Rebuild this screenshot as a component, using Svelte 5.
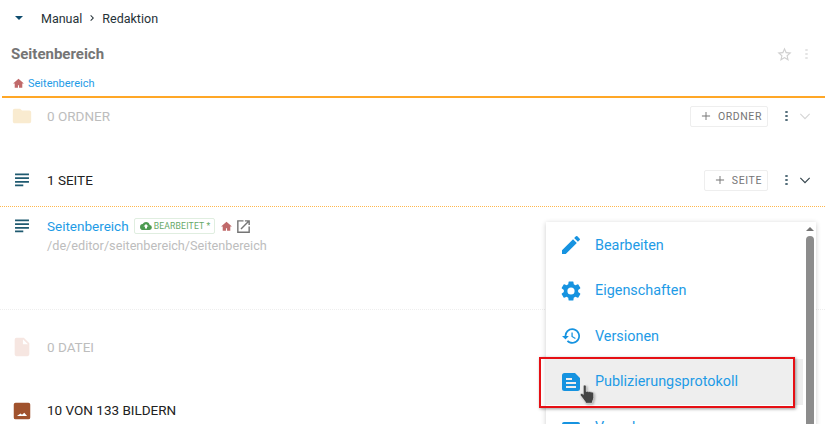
<script>
  const menu = [
    { label: 'Bearbeiten', box: '0 0 24 24', d: 'M3 17.25V21h3.75L17.81 9.94l-3.75-3.75L3 17.25zM20.71 7.04a1 1 0 0 0 0-1.41l-2.34-2.34a1 1 0 0 0-1.41 0l-1.83 1.83 3.75 3.75 1.83-1.83z' },
    { label: 'Eigenschaften', box: '0 0 24 24', d: 'M19.14 12.94c.04-.3.06-.61.06-.94s-.02-.64-.07-.94l2.03-1.58a.5.5 0 0 0 .12-.61l-1.92-3.32a.5.5 0 0 0-.59-.22l-2.39.96a7 7 0 0 0-1.62-.94l-.36-2.54a.48.48 0 0 0-.48-.41h-3.84a.48.48 0 0 0-.47.41l-.36 2.54c-.59.24-1.13.57-1.62.94l-2.39-.96a.48.48 0 0 0-.59.22L2.74 8.87a.47.47 0 0 0 .12.61l2.03 1.58c-.05.3-.09.63-.09.94s.02.64.07.94l-2.03 1.58a.5.5 0 0 0-.12.61l1.92 3.32c.12.22.37.29.59.22l2.39-.96c.5.38 1.03.7 1.62.94l.36 2.54c.05.24.24.41.48.41h3.84c.24 0 .44-.17.47-.41l.36-2.54c.59-.24 1.13-.56 1.62-.94l2.39.96c.22.08.47 0 .59-.22l1.92-3.32a.47.47 0 0 0-.12-.61l-2.01-1.58zM12 15.6a3.6 3.6 0 1 1 0-7.2 3.6 3.6 0 0 1 0 7.2z' },
    { label: 'Versionen', box: '-2.5 -2 28 28', d: 'M13 3a9 9 0 0 0-9 9H1l3.89 3.89.07.14L9 12H6a7 7 0 1 1 2.05 4.95l-1.42 1.42A9 9 0 1 0 13 3zm-1 5v5l4.28 2.54.72-1.21-3.5-2.08V8H12z' },
    { label: 'Publizierungsprotokoll', box: '0 0 24 24', d: 'M5.5 3A2.5 2.5 0 0 0 3 5.5v13A2.5 2.5 0 0 0 5.5 21h13a2.5 2.5 0 0 0 2.5-2.5V8l-5-5H5.5zM7 8h6v2H7V8zm0 4h10v2H7v-2zm0 4h10v2H7v-2z', active: true },
    { label: 'Vorschau', box: '0 0 24 24', d: 'M19 6H5a2 2 0 0 0-2 2v11a2 2 0 0 0 2 2h14a2 2 0 0 0 2-2V8a2 2 0 0 0-2-2zm0 13H5V8h14v11z' }
  ];
  const linesIcon = 'M4.4 5h15.2v1.9H4.4zM4.4 9h15.2v1.9H4.4zM4.4 13h15.2v1.9H4.4zM4.4 17h9v1.9h-9z';
  const home = 'M11 20v-5h2v5h6v-8h3L12 3 2 12h3v8z';
</script>

<div class="page">
  <header class="crumbs">
    <span class="caret"></span>
    <span>Manual</span>
    <svg class="chev" viewBox="0 0 24 24"><path d="M8.6 16.6 13.2 12 8.6 7.4 10 6l6 6-6 6z" /></svg>
    <span>Redaktion</span>
  </header>

  <div class="title-row">
    <h1>Seitenbereich</h1>
    <svg class="star" viewBox="0 0 24 24"><path d="M22 9.24l-7.19-.62L12 2 9.19 8.63 2 9.24l5.46 4.73L5.82 21 12 17.27 18.18 21l-1.63-7.03L22 9.24zM12 15.4l-3.76 2.27 1-4.28-3.32-2.88 4.38-.38L12 6.1l1.71 4.04 4.38.38-3.32 2.88 1 4.28L12 15.4z" /></svg>
    <span class="dots faint"><i></i><i></i><i></i></span>
  </div>

  <div class="path-row">
    <svg class="home" viewBox="0 0 24 24"><path d={home} /></svg>
    <span>Seitenbereich</span>
  </div>

  <section class="group dim">
    <svg class="gicon folder" viewBox="0 0 24 24"><path d="M10 4H4a2 2 0 0 0-2 2v12c0 1.1.9 2 2 2h16a2 2 0 0 0 2-2V8a2 2 0 0 0-2-2h-8l-2-2z" /></svg>
    <span class="gname">0 ORDNER</span>
    <button class="add"><svg viewBox="0 0 24 24"><path d="M19 12.8h-6.2V19h-1.6v-6.2H5v-1.6h6.2V5h1.6v6.2H19z" /></svg>ORDNER</button>
    <span class="dots"><i></i><i></i><i></i></span>
    <svg class="down faint-down" viewBox="0 0 24 24"><path d="M6.9 9 12 14.1 17.1 9l1 1L12 16.1 5.900 10z" /></svg>
  </section>

  <section class="group seite">
    <svg class="gicon lines" viewBox="0 0 24 24"><path d={linesIcon} /></svg>
    <span class="gname">1 SEITE</span>
    <button class="add"><svg viewBox="0 0 24 24"><path d="M19 12.8h-6.2V19h-1.6v-6.2H5v-1.6h6.2V5h1.6v6.2H19z" /></svg>SEITE</button>
    <span class="dots"><i></i><i></i><i></i></span>
    <svg class="down" viewBox="0 0 24 24"><path d="M6.9 9 12 14.1 17.1 9l1 1L12 16.1 5.900 10z" /></svg>
  </section>

  <article class="item">
    <svg class="gicon lines" viewBox="0 0 24 24"><path d={linesIcon} /></svg>
    <div>
      <div class="item-head">
        <span class="item-name">Seitenbereich</span>
        <span class="badge">
          <svg viewBox="0 0 24 24"><path d="M19.35 10.04A7.49 7.49 0 0 0 12 4a7.5 7.5 0 0 0-6.65 4.04A6 6 0 0 0 6 20h13a5 5 0 0 0 .35-9.96zM14 13v4h-4v-4H7l5-5 5 5h-3z" /></svg>
          BEARBEITET *
        </span>
        <svg class="home big" viewBox="0 0 24 24"><path d={home} /></svg>
        <svg class="open" viewBox="0 0 24 24"><path d="M19 19H5V5h7V3H3v18h18v-9h-2v7zM14 3v2h3.59l-9.83 9.83 1.41 1.41L19 6.41V10h2V3h-7z" /></svg>
      </div>
      <div class="item-path">/de/editor/seitenbereich/Seitenbereich</div>
    </div>
  </article>

  <section class="group dim datei">
    <svg class="gicon file" viewBox="0 0 24 24"><path d="M14 2H6a2 2 0 0 0-2 2v16c0 1.1.9 2 2 2h12a2 2 0 0 0 2-2V8l-6-6zm-1 7V3.5L18.5 9H13z" /></svg>
    <span class="gname">0 DATEI</span>
  </section>

  <section class="group bilder">
    <svg class="gicon image" viewBox="0 0 24 24"><path fill-rule="evenodd" d="M5 3h14a2 2 0 0 1 2 2v14a2 2 0 0 1-2 2H5a2 2 0 0 1-2-2V5a2 2 0 0 1 2-2zM6.500 17.500h11l-3-3.500-2.500 2.200-1.600-1.400-3.900 2.700z" /></svg>
    <span class="gname">10 VON 133 BILDERN</span>
  </section>

  <nav class="menu">
    <ul>
      {#each menu as m}
        <li class:active={m.active}>
          <svg viewBox={m.box}><path d={m.d} /></svg>
          <span>{m.label}</span>
        </li>
      {/each}
    </ul>
    <div class="scroll">
      <span class="arrow"></span>
      <span class="thumb"></span>
    </div>
  </nav>

  <div class="mark"></div>
  <svg class="hand" viewBox="0 0 18 22">
    <path d="M6 1.2c.9 0 1.6.7 1.6 1.6v5.400l1.200-.2c.6-.1 1.100.1 1.400.5.5-.3 1.200-.3 1.700.1.5-.2 1.200-.1 1.600.3.4-.2 1-.1 1.400.2.6.4.9 1 .9 1.700v4.200c0 1.300-.4 2.300-1 3.200l-.6 3H7l-.5-1.700L1.600 13c-.6-.7-.6-1.600 0-2.200.6-.5 1.400-.5 2 0l.8.8V2.800c0-.9.7-1.600 1.600-1.600z" fill="#444" stroke="#fff" stroke-width=".6" />
  </svg>
</div>

<style>
  :global(body) {
    margin: 0;
    background: #fff;
    font-family: Roboto, "Liberation Sans", sans-serif;
    overflow: hidden;
  }
  .page {
    position: relative;
    width: 825px;
    height: 424px;
    overflow: hidden;
    color: #212121;
    font-size: 13px;
  }
  svg { display: block; fill: currentColor; flex-shrink: 0; }

  .crumbs {
    height: 36px;
    display: flex;
    align-items: center;
    padding-left: 15px;
    gap: 4px;
    font-size: 12.5px;
    color: #263238;
  }
  .caret {
    width: 0;
    height: 0;
    margin: 0 14px 0 0;
    border-left: 4px solid transparent;
    border-right: 4px solid transparent;
    border-top: 4px solid #0f4c6e;
  }
  .chev { width: 12px; height: 12px; color: #263238; }

  .title-row {
    height: 36px;
    display: flex;
    align-items: center;
    padding: 0 17px 0 11px;
  }
  h1 {
    margin: 0;
    flex: 1;
    font-size: 15px;
    font-weight: 700;
    color: #757575;
  }
  .star { width: 17px; height: 17px; color: #d0d0d0; margin-right: 12px; }

  .dots { display: flex; flex-direction: column; gap: 1.5px; width: 3px; }
  .dots i { width: 3px; height: 2.6px; border-radius: 50%; background: #546e7a; }
  .dots.faint i { background: #e4e4e4; }

  .path-row {
    height: 26px;
    box-sizing: border-box;
    padding: 0 0 1px 10px;
    margin-left: 2px;
    display: flex;
    align-items: center;
    gap: 3px;
    font-size: 11px;
    color: #1e9be6;
    border-bottom: 2px solid #ffa726;
  }
  .home { width: 13px; height: 13px; color: #c0696a; }
  .home.big { margin-left: 5.5px; }

  .group {
    display: flex;
    align-items: center;
    height: 36px;
    padding: 0 10px 0 11px;
    font-size: 13.5px;
  }
  .gicon { width: 22px; height: 22px; margin-right: 14px; }
  .gname { flex: 1; }
  .dim .gname { color: #bdbdbd; }
  .folder { color: #f9ebd0; }
  .lines { color: #1f5a70; }
  .file { color: #f6e6e1; }
  .image { color: #a0522d; margin-top: 2px; }

  .seite { margin-top: 28px; }

  .add {
    height: 21px;
    display: flex;
    align-items: center;
    gap: 5px;
    padding: 0 5px 0 8px;
    margin-right: 17px;
    font: 400 10.5px Roboto, sans-serif;
    letter-spacing: .6px;
    color: #757575;
    background: #fff;
    border: 1px solid #eee;
    border-radius: 2px;
  }
  .add svg { width: 14px; height: 14px; }
  .down { width: 20px; height: 20px; margin-left: 7px; color: #37474f; }
  .faint-down { color: #d6d6d6; }

  .item {
    height: 104px;
    box-sizing: border-box;
    margin-top: 8px;
    padding: 9px 10px 0 11px;
    display: flex;
    border-top: 1px dotted #ffb74d;
    border-bottom: 1px dotted #eee;
  }
  .item .gicon { margin-top: -1px; }
  .item-head { display: flex; align-items: center; height: 20px; }
  .item-name { font-size: 13.5px; color: #1e9be6; }
  .badge {
    display: flex;
    align-items: center;
    gap: 2px;
    height: 14px;
    margin-left: 5px;
    padding: 0 3px 0 5px;
    font-size: 8.6px;
    letter-spacing: .2px;
    color: #66a866;
    border: 1px solid #e0eee0;
    border-radius: 2px;
  }
  .badge svg { width: 12px; height: 12px; color: #4c9a50; }
  .open { width: 17px; height: 17px; margin-left: 2px; color: #757575; }
  .item-path { margin-top: 2px; font-size: 12.7px; color: #bdbdbd; }

  .datei { margin-top: 19px; }
  .bilder { margin-top: 27px; }
  .bilder .gname { color: #212121; }

  .menu {
    position: absolute;
    left: 546px;
    top: 222px;
    width: 270px;
    height: 240px;
    display: flex;
    background: #fff;
    box-shadow: 0 1px 5px rgba(0, 0, 0, .2);
  }
  .menu ul { list-style: none; margin: 0; padding: 0.4px 0 0; flex: 1; }
  .menu li {
    height: 45.6px;
    display: flex;
    align-items: center;
    padding-left: 13px;
    font-size: 14.4px;
    color: #1e9be6;
  }
  .menu li svg { width: 24px; height: 24px; margin-right: 12px; color: #1693e0; }
  .menu li.active { background: #eee; }
  .scroll { width: 13px; display: flex; flex-direction: column; align-items: center; }
  .arrow {
    margin-top: 5px;
    border-left: 4px solid transparent;
    border-right: 4px solid transparent;
    border-bottom: 4px solid #757575;
  }
  .thumb { width: 8px; height: 200px; margin-top: 5px; border-radius: 4px; background: #8c8c8c; }

  .mark {
    position: absolute;
    left: 539px;
    top: 357px;
    width: 252px;
    height: 47px;
    border: 2px solid #e60f14;
    box-shadow: 1px 1px 3px rgba(0, 0, 0, .4);
  }
  .hand {
    position: absolute;
    left: 579px;
    top: 384px;
    width: 17px;
    height: 20px;
    filter: drop-shadow(1px 1px 1px rgba(0, 0, 0, .3));
  }
</style>
